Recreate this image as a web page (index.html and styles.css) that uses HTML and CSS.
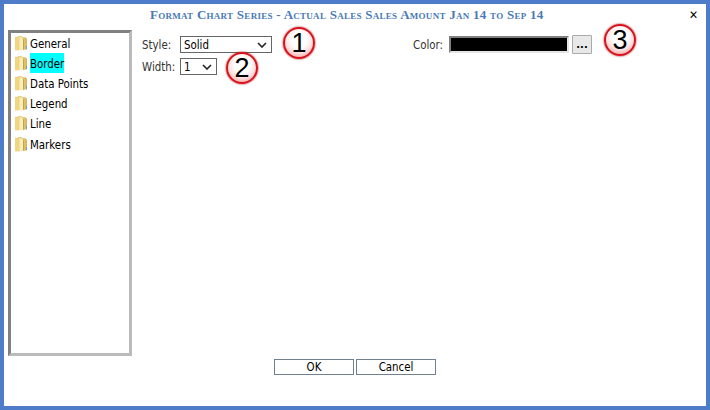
FILE: index.html
```html
<!DOCTYPE html>
<html>
<head>
    <title>Format Chart Series</title>
    <link rel="stylesheet" href="styles.css">
</head>
<body>
    <svg width="0" height="0" class="defs">
        <defs>
            <linearGradient id="folderFill" x1="0" y1="0" x2="1" y2="0">
                <stop offset="0" stop-color="#f0d882"/>
                <stop offset="0.55" stop-color="#eed27c"/>
                <stop offset="1" stop-color="#d4b45a"/>
            </linearGradient>
            <symbol id="folder" viewBox="0 0 14 16">
                <path d="M1 2.5 L6 1 L8 2 L8 14 L1 15 Z" fill="#c9a84e"/>
                <path d="M6 1.5 L12 2.5 L13 4 L13 14.5 L2 15.5 L1 15 L1 2.5 Z" fill="url(#folderFill)"/>
                <path d="M5.5 1.5 L9 4 L9 14.8 L5.5 15.2 Z" fill="#f8eebc"/>
                <path d="M9 4 L9.8 4.5 L9.8 14.6 L9 14.8 Z" fill="#b8994a"/>
                <rect x="12" y="11" width="1" height="3" fill="#5aa6d8"/>
            </symbol>
            <symbol id="chevron" viewBox="0 0 10 6">
                <path d="M1 1 L5 5 L9 1" fill="none" stroke="#222" stroke-width="1.6"/>
            </symbol>
        </defs>
    </svg>

    <div class="dialog">
        <div class="title-bar">
            <h1>Format Chart Series - Actual Sales Sales Amount Jan 14 to Sep 14</h1>
            <span class="close-btn">&#10005;</span>
        </div>

        <div class="main">
            <ul class="tree">
                <li><svg class="folder"><use href="#folder"/></svg><span>General</span></li>
                <li><svg class="folder"><use href="#folder"/></svg><span class="selected">Border</span></li>
                <li><svg class="folder"><use href="#folder"/></svg><span>Data Points</span></li>
                <li><svg class="folder"><use href="#folder"/></svg><span>Legend</span></li>
                <li><svg class="folder"><use href="#folder"/></svg><span>Line</span></li>
                <li class="last"><svg class="folder"><use href="#folder"/></svg><span>Markers</span></li>
            </ul>

            <div class="options">
                <div class="row">
                    <label class="field-label">Style:</label>
                    <div class="select style-select"><span>Solid</span><svg class="chevron"><use href="#chevron"/></svg></div>
                    <label class="color-label">Color:</label>
                    <div class="color-box"></div>
                    <button class="dots-btn">...</button>
                </div>
                <div class="row">
                    <label class="field-label">Width:</label>
                    <div class="select width-select"><span>1</span><svg class="chevron"><use href="#chevron"/></svg></div>
                </div>
            </div>
        </div>

        <div class="footer">
            <button class="action-btn">OK</button>
            <button class="action-btn">Cancel</button>
        </div>

        <div class="callout callout-1">1</div>
        <div class="callout callout-2">2</div>
        <div class="callout callout-3">3</div>
    </div>
</body>
</html>
```

FILE: styles.css
```css
html, body {
    margin: 0;
    padding: 0;
}
body {
    width: 710px;
    height: 410px;
    overflow: hidden;
    font-family: "DejaVu Sans Condensed", "DejaVu Sans", Verdana, sans-serif;
    font-stretch: condensed;
    font-size: 11.4px;
    color: #000;
}
.defs {
    display: block;
    height: 0;
}
.dialog {
    position: relative;
    box-sizing: border-box;
    width: 710px;
    height: 410px;
    border: 4px solid #4f7cc9;
    background: #fff;
    display: flex;
    flex-direction: column;
}
.title-bar {
    height: 26px;
    display: flex;
    align-items: center;
    padding: 0 8px 4px 146px;
    box-sizing: border-box;
}
.title-bar h1 {
    flex: 1;
    margin: 0;
    font-family: "Liberation Serif", Georgia, serif;
    font-size: 13px;
    font-weight: bold;
    font-variant: small-caps;
    letter-spacing: 0.27px;
    color: #4a7ab5;
    white-space: nowrap;
}
.close-btn {
    font-family: "DejaVu Sans", sans-serif;
    font-size: 12px;
    font-weight: bold;
    color: #000;
}
.main {
    height: 326px;
    display: flex;
    padding-left: 4px;
}
.tree {
    box-sizing: border-box;
    width: 124px;
    height: 326px;
    margin: 0;
    padding: 0 0 0 3px;
    list-style: none;
    border: 3px solid;
    border-color: #808080 #bbbbbb #bbbbbb #808080;
}
.tree li {
    display: flex;
    align-items: center;
    height: 20px;
}
.tree li.last {
    margin-top: 1px;
}
.tree span {
    height: 20px;
    line-height: 22px;
}
.tree .selected {
    background: #00ffff;
}
.folder {
    width: 14px;
    height: 16px;
    margin-right: 2px;
}
.options {
    flex: 1;
    padding: 6px 0 0 10px;
}
.row {
    display: flex;
    align-items: center;
    height: 17px;
    margin-bottom: 5px;
    color: #333;
}
.field-label {
    width: 38px;
}
.select {
    box-sizing: border-box;
    height: 17px;
    padding: 0 4px 0 3px;
    border: 1px solid #666;
    background: #fff;
    color: #000;
    display: flex;
    align-items: center;
    justify-content: space-between;
}
.chevron {
    width: 10px;
    height: 6px;
}
.style-select {
    width: 92px;
}
.width-select {
    width: 37px;
}
.color-label {
    margin-left: 141px;
    width: 36px;
}
.color-box {
    box-sizing: border-box;
    width: 120px;
    height: 17px;
    background: #000;
    border: 2px solid;
    border-color: #808080 #e4e4e4 #e4e4e4 #808080;
}
.dots-btn {
    box-sizing: border-box;
    width: 20px;
    height: 19px;
    margin: -1px 0 0 3px;
    padding: 0;
    border: 1px solid #aaa;
    border-radius: 1px;
    background: #e8e8e8;
    font-family: "DejaVu Sans", Verdana, sans-serif;
    font-size: 10px;
    font-weight: bold;
}
.footer {
    display: flex;
    justify-content: center;
    gap: 2px;
    padding: 3px 0 0 0;
    margin-right: 1px;
}
.action-btn {
    box-sizing: border-box;
    width: 80px;
    height: 16px;
    padding: 1px 0 0 1px;
    border: 1px solid #708090;
    border-radius: 0;
    background: #fff;
    font-family: inherit;
    font-stretch: condensed;
    font-size: 11.4px;
    line-height: 13px;
    color: #000;
}
/* numbered annotations sitting on top of the dialog */
.callout {
    position: absolute;
    box-sizing: border-box;
    width: 32px;
    height: 32px;
    border: 2px solid #d8121a;
    border-radius: 50%;
    background: radial-gradient(circle at 50% 38%, #fff 35%, #fde0e0 60%, #ee8080 100%);
    box-shadow: 0 0 2px #900;
    font-family: "Liberation Sans", Arial, sans-serif;
    font-size: 27px;
    line-height: 28px;
    text-align: center;
    color: #000;
}
.callout-1 {
    left: 279px;
    top: 23px;
}
.callout-2 {
    left: 222px;
    top: 48px;
}
.callout-3 {
    left: 600px;
    top: 20px;
}
```
